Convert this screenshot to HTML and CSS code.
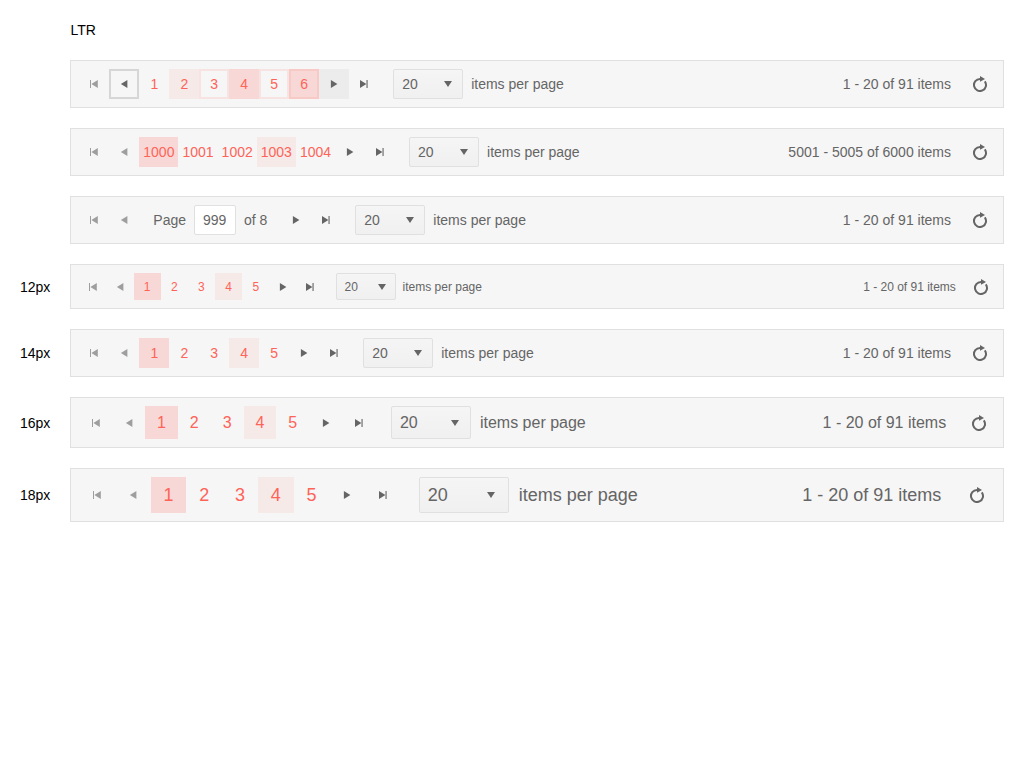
FILE: index.html
```html
<!DOCTYPE html>
<html lang="en">
<head>
<meta charset="utf-8">
<title>Pager</title>
<link rel="stylesheet" href="styles.css">
</head>
<body>
<svg class="sprite" aria-hidden="true">
  <symbol id="first" viewBox="0 0 16 16"><path d="M4 4h1v8H4zM11.8 4v8L5.4 8z"/></symbol>
  <symbol id="prev" viewBox="0 0 16 16"><path d="M11.4 4v8L4.9 8z"/></symbol>
  <symbol id="next" viewBox="0 0 16 16"><path d="M4.9 4v8l6.5-4z"/></symbol>
  <symbol id="last" viewBox="0 0 16 16"><path d="M4 4v8l6.4-4zM10.5 4h1.1v8h-1.1z"/></symbol>
  <symbol id="down" viewBox="0 0 16 16"><path d="M4 5h8l-4 6z"/></symbol>
  <symbol id="reload" viewBox="0 0 16 16"><path d="M12.8 5.4A6 6 0 1 1 8 3" fill="none" stroke="currentColor" stroke-width="2"/><path d="M8 0l5 2.9-5 2.9z"/></symbol>
</svg>
<main class="page">
  <h1 class="title">LTR</h1>
  <div class="row"><span></span>
    <div class="pager">
      <a class="btn off"><svg><use href="#first"/></svg></a><a class="btn focus"><svg><use href="#prev"/></svg></a>
      <a class="btn num">1</a><a class="btn num hover">2</a><a class="btn num focus">3</a><a class="btn num selected">4</a><a class="btn num focus">5</a><a class="btn num selected focus">6</a>
      <a class="btn hover"><svg><use href="#next"/></svg></a><a class="btn"><svg><use href="#last"/></svg></a>
      <span class="select">20<i class="caret"><svg><use href="#down"/></svg></i></span><span>items per page</span>
      <span class="info">1 - 20 of 91 items</span><a class="btn"><svg><use href="#reload"/></svg></a>
    </div>
  </div>
  <div class="row"><span></span>
    <div class="pager">
      <a class="btn off"><svg><use href="#first"/></svg></a><a class="btn off"><svg><use href="#prev"/></svg></a>
      <a class="btn num selected">1000</a><a class="btn num">1001</a><a class="btn num">1002</a><a class="btn num hover">1003</a><a class="btn num">1004</a>
      <a class="btn"><svg><use href="#next"/></svg></a><a class="btn"><svg><use href="#last"/></svg></a>
      <span class="select">20<i class="caret"><svg><use href="#down"/></svg></i></span><span>items per page</span>
      <span class="info">5001 - 5005 of 6000 items</span><a class="btn"><svg><use href="#reload"/></svg></a>
    </div>
  </div>
  <div class="row"><span></span>
    <div class="pager">
      <a class="btn off"><svg><use href="#first"/></svg></a><a class="btn off"><svg><use href="#prev"/></svg></a>
      <span class="goto">Page<span class="field">999</span>of 8</span>
      <a class="btn"><svg><use href="#next"/></svg></a><a class="btn"><svg><use href="#last"/></svg></a>
      <span class="select">20<i class="caret"><svg><use href="#down"/></svg></i></span><span>items per page</span>
      <span class="info">1 - 20 of 91 items</span><a class="btn"><svg><use href="#reload"/></svg></a>
    </div>
  </div>
  <div class="row"><span>12px</span>
    <div class="pager s12">
      <a class="btn off"><svg><use href="#first"/></svg></a><a class="btn off"><svg><use href="#prev"/></svg></a>
      <a class="btn num selected">1</a><a class="btn num">2</a><a class="btn num">3</a><a class="btn num hover">4</a><a class="btn num">5</a>
      <a class="btn"><svg><use href="#next"/></svg></a><a class="btn"><svg><use href="#last"/></svg></a>
      <span class="select">20<i class="caret"><svg><use href="#down"/></svg></i></span><span>items per page</span>
      <span class="info">1 - 20 of 91 items</span><a class="btn"><svg><use href="#reload"/></svg></a>
    </div>
  </div>
  <div class="row"><span>14px</span>
    <div class="pager">
      <a class="btn off"><svg><use href="#first"/></svg></a><a class="btn off"><svg><use href="#prev"/></svg></a>
      <a class="btn num selected">1</a><a class="btn num">2</a><a class="btn num">3</a><a class="btn num hover">4</a><a class="btn num">5</a>
      <a class="btn"><svg><use href="#next"/></svg></a><a class="btn"><svg><use href="#last"/></svg></a>
      <span class="select">20<i class="caret"><svg><use href="#down"/></svg></i></span><span>items per page</span>
      <span class="info">1 - 20 of 91 items</span><a class="btn"><svg><use href="#reload"/></svg></a>
    </div>
  </div>
  <div class="row"><span>16px</span>
    <div class="pager s16">
      <a class="btn off"><svg><use href="#first"/></svg></a><a class="btn off"><svg><use href="#prev"/></svg></a>
      <a class="btn num selected">1</a><a class="btn num">2</a><a class="btn num">3</a><a class="btn num hover">4</a><a class="btn num">5</a>
      <a class="btn"><svg><use href="#next"/></svg></a><a class="btn"><svg><use href="#last"/></svg></a>
      <span class="select">20<i class="caret"><svg><use href="#down"/></svg></i></span><span>items per page</span>
      <span class="info">1 - 20 of 91 items</span><a class="btn"><svg><use href="#reload"/></svg></a>
    </div>
  </div>
  <div class="row"><span>18px</span>
    <div class="pager s18">
      <a class="btn off"><svg><use href="#first"/></svg></a><a class="btn off"><svg><use href="#prev"/></svg></a>
      <a class="btn num selected">1</a><a class="btn num">2</a><a class="btn num">3</a><a class="btn num hover">4</a><a class="btn num">5</a>
      <a class="btn"><svg><use href="#next"/></svg></a><a class="btn"><svg><use href="#last"/></svg></a>
      <span class="select">20<i class="caret"><svg><use href="#down"/></svg></i></span><span>items per page</span>
      <span class="info">1 - 20 of 91 items</span><a class="btn"><svg><use href="#reload"/></svg></a>
    </div>
  </div>
</main>
</body>
</html>
```
FILE: styles.css
```css
* { box-sizing: border-box; }
body { margin: 0; background: #fff; color: #000; font: 14px/1.43 "Liberation Sans", Arial, sans-serif; }
.sprite { display: none; }
.page { display: flex; flex-direction: column; gap: 20px; padding: 20px; }
.title { margin: 0 0 0 50.4px; font-size: 14px; font-weight: 400; line-height: 20px; }
.row { display: grid; grid-template-columns: 50px 1fr; align-items: center; }
.pager {
  --shift: 0px;
  display: flex;
  align-items: center;
  padding: 8px 8px 8px 8.34px;
  border: 1px solid #e0e0e0;
  background: #f6f6f6;
  color: #656565;
  font-size: 14px;
  white-space: nowrap;
}
.s12 { --shift: 2px; font-size: 12px; }
.s16 { --shift: 1px; font-size: 16px; }
.s18 { --shift: 2px; font-size: 18px; }
.btn {
  display: flex;
  align-items: center;
  justify-content: center;
  flex: none;
  min-width: calc(1.428571em + 10px);
  height: calc(1.428571em + 10px);
}
.btn svg, .caret svg { width: 16px; height: 16px; fill: currentColor; flex: none; }
.num { padding: var(--shift) 4px 0; color: #ff6358; }
.off { opacity: .6; }
.hover { background: rgba(0, 0, 0, .04); }
.focus { box-shadow: inset 0 0 0 2px rgba(0, 0, 0, .13); }
.num.hover { background: rgba(255, 99, 88, .08); }
.num.selected { background: rgba(255, 99, 88, .2); }
.num.focus { box-shadow: inset 0 0 0 2px rgba(255, 99, 88, .13); }
.select {
  display: flex;
  align-items: center;
  justify-content: space-between;
  width: 5em;
  height: calc(1.428571em + 10px);
  margin: 0 calc(.5em + 1px) 0 1em;
  padding: var(--shift) 0 0 8px;
  border: 1px solid #e0e0e0;
  border-radius: 2px;
  background: linear-gradient(#f5f5f5, #f0f0f0);
}
.select + span, .info { padding-top: var(--shift); }
.caret { display: flex; justify-content: center; width: calc(1.428571em + 8px); margin-top: calc(var(--shift) * -1); }
.info { margin: 0 1em 0 auto; }
.goto { display: flex; align-items: center; gap: 8px; margin: 0 1em; }
.field {
  width: 3em;
  height: 30px;
  padding: 4px 8px;
  border: 1px solid #e0e0e0;
  border-radius: 2px;
  background: #fff;
}
```
